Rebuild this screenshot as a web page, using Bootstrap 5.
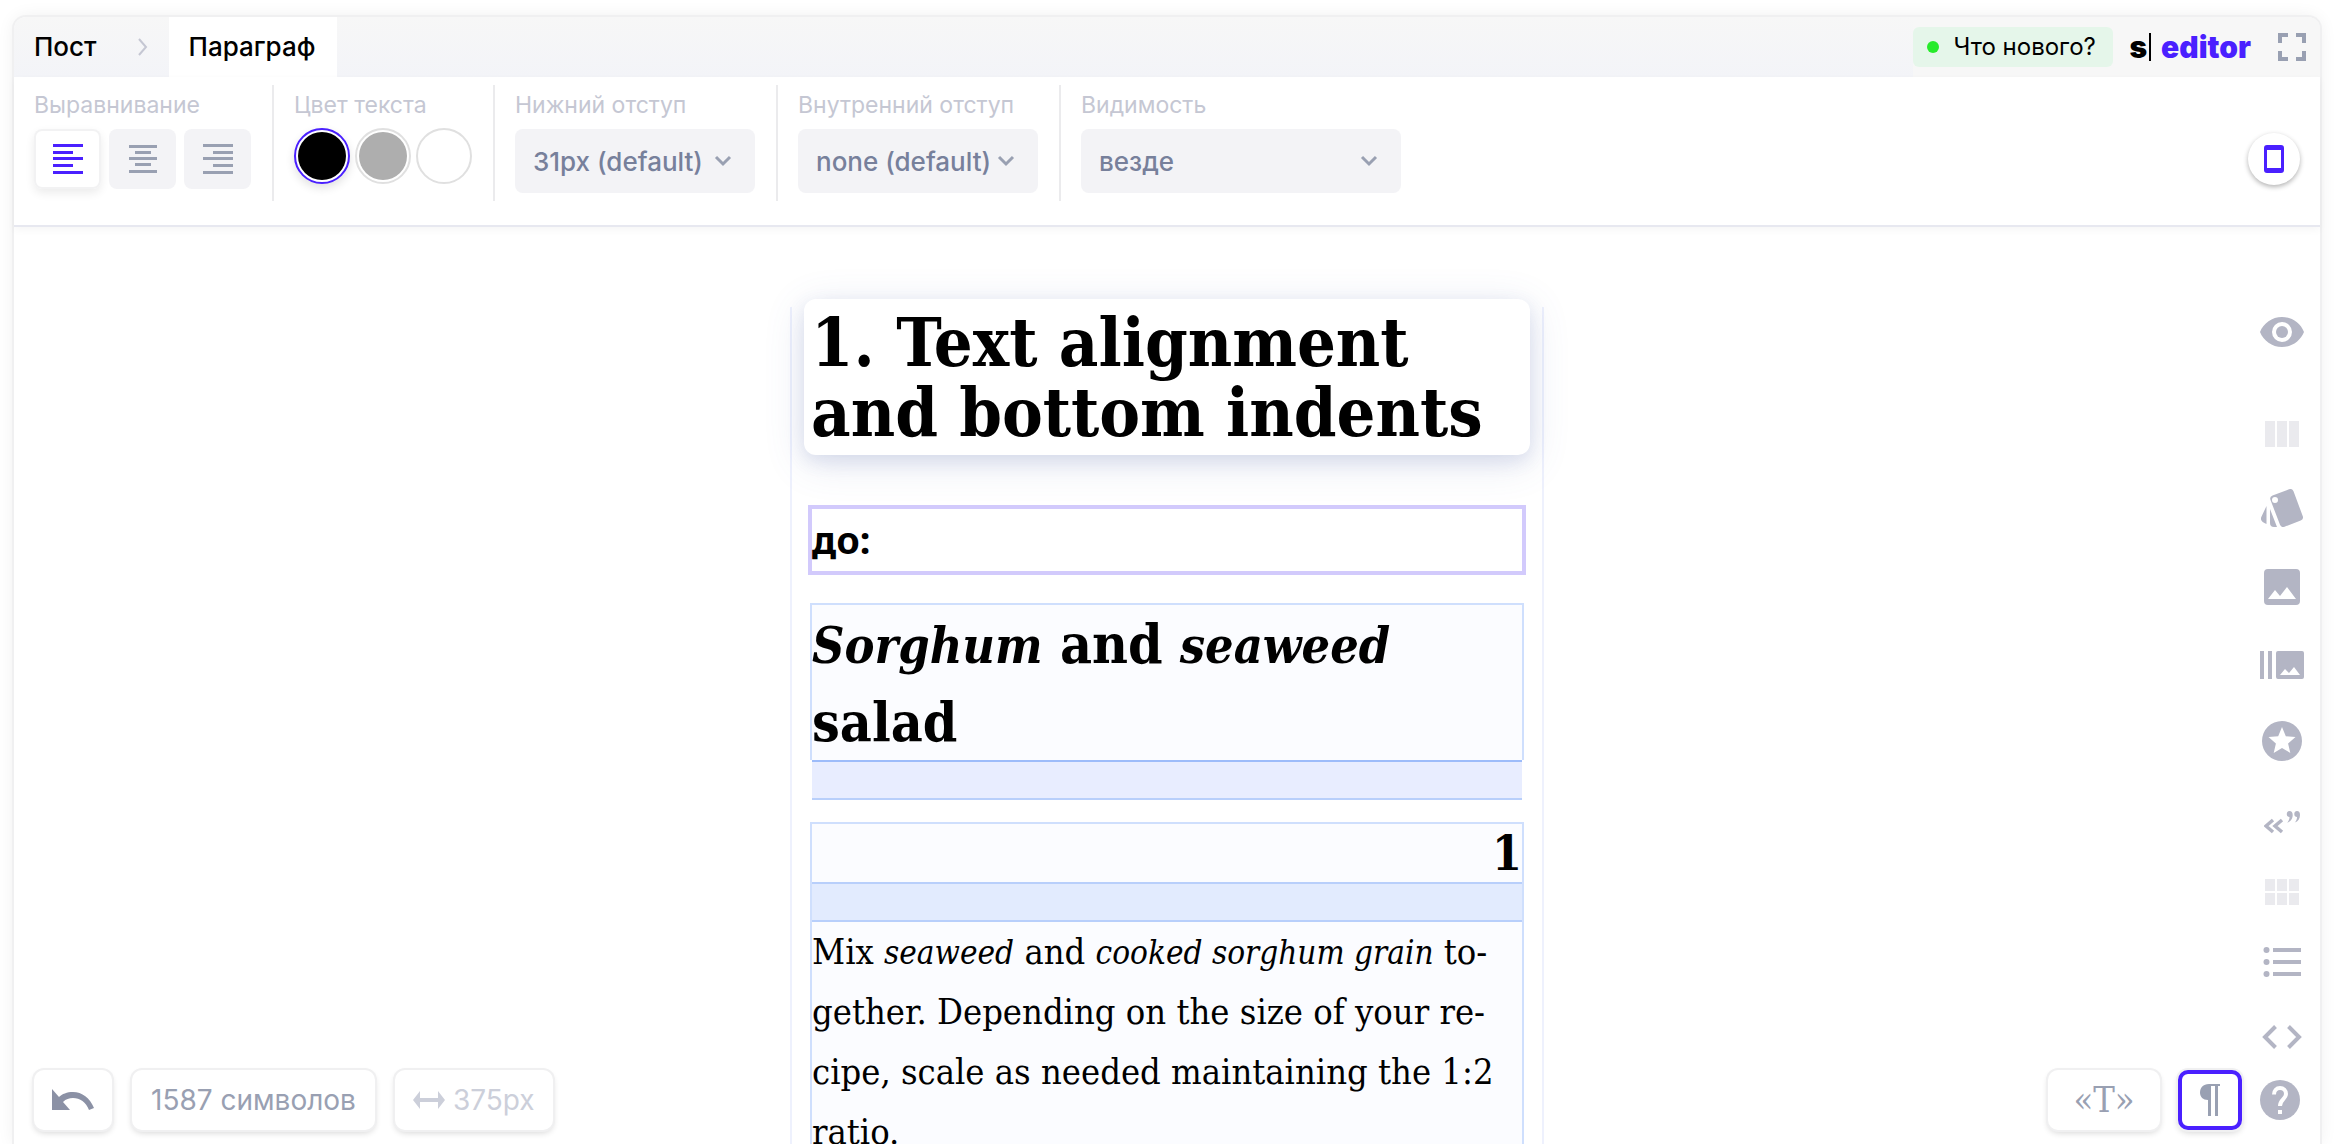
<!DOCTYPE html>
<html lang="ru">
<head>
<meta charset="utf-8">
<meta name="viewport" content="width=device-width, initial-scale=1">
<title>s| editor</title>
<link href="https://cdn.jsdelivr.net/npm/bootstrap@5.3.0/dist/css/bootstrap.min.css" rel="stylesheet">
<style>
:root{--accent:#4a20ff;--icon:#b3b5c4;--slate:#99a0b2;--serif:"DejaVu Serif Condensed","DejaVu Serif",serif}
body{font-family:Inter,sans-serif;font-size:26px;line-height:32px;color:#000;background:#fff;height:100vh;overflow:hidden}
svg{display:block;fill:currentColor}
.shell{margin:17px 14px 0;height:calc(100vh - 17px);border-radius:12px 12px 0 0;box-shadow:0 0 0 2px #f0f0f1,0 0 18px rgba(0,0,0,.07)}
.topbar{height:60px;background:linear-gradient(#f7f7f7,#f3f4f8);border-radius:12px 12px 0 0}
.topbar-end{height:60px;padding-right:14px;background:#f7f7f7;border-radius:0 12px 0 0}
.crumb{color:#000;text-decoration:none;font-weight:500;font-size:26px;padding:0 20px;height:60px}
.crumb.current{background:#fff;padding:0 22px 0 20px}
.crumb-sep{width:12px;margin:0 20px;color:#c5c7d3}
.news{background:#e5f6ea;color:#000;border:0;border-radius:6px;height:40px;width:200px;padding:0 14px;gap:14px;font-size:24px;white-space:nowrap}
.news-dot{width:12px;height:12px;border-radius:50%;background:#26eb2b;flex:none}
.brand{font-weight:900;font-size:30px;color:var(--accent);text-decoration:none;gap:2px;margin:0 27px 0 16px}
.brand-s{color:#000}
.brand-caret{width:2px;height:28px;background:#000;margin-right:8px}
.plain{background:none;border:0;padding:0;color:var(--slate)}
.tools{height:150px;padding:8px 20px 0;border-bottom:2px solid #e7e8f0;box-shadow:0 3px 8px rgba(0,0,0,.04)}
.tool{height:116px;padding:5px 21px 0 20px;border-right:2px solid #ebebed}
.tool:first-child{padding-left:0}
.tool-last{border-right:0}
.tool-name{display:block;font-size:23px;line-height:30px;color:#c5c7d3;margin:0 0 9px;white-space:nowrap}
.align-btn{width:67px;height:60px;border:0;border-radius:8px;background:#f3f3f6;color:var(--slate)}
.align-btn.on{background:#fff;color:var(--accent);box-shadow:inset 0 0 0 2px #f2f2f3,0 4px 10px rgba(0,0,0,.08)}
.swatches{gap:5px}
.swatch{width:56px;height:56px;border-radius:50%;border:2px solid #e0e0e0;padding:2px;background:#fff}
.swatch i{display:block;width:48px;height:48px;border-radius:50%}
.swatch.on{border-color:var(--accent);box-shadow:0 4px 10px rgba(0,0,0,.12)}
.pick{width:240px;height:64px;border:0;border-radius:8px;font-size:26px;font-weight:500;color:#77809b;padding:0 44px 0 18px;background-color:#f3f3f6;background-size:18px 12px;background-position:right 23px center;
background-image:url("data:image/svg+xml,%3Csvg xmlns='http://www.w3.org/2000/svg' viewBox='0 0 18 12'%3E%3Cpath d='M2 2l7 7 7-7' fill='none' stroke='%2399a0b2' stroke-width='3'/%3E%3C/svg%3E")}
.pick-wide{width:320px}
.round{width:52px;height:52px;border-radius:50%;border:0;background:#fff;color:var(--accent);box-shadow:0 2px 5px rgba(0,0,0,.3)}
.stage{display:grid;grid-template-columns:1fr 754px 1fr;overflow:hidden;min-height:0}
.sheet{padding:72px 11px 0;font-family:var(--serif);
background:linear-gradient(#eef1fd,#eef1fd) left 80px/2px 100% no-repeat,linear-gradient(#eef1fd,#eef1fd) right 80px/2px 100% no-repeat}
.title-box{height:156px;border-radius:12px;background:#fff;padding:8px 0 0 7px;margin:0 3px;box-shadow:0 8px 40px rgba(80,100,170,.16),0 6px 18px rgba(80,100,170,.14)}
.title-box h1{font-size:68px;line-height:70px;font-weight:700;margin:0;white-space:nowrap}
.before{height:70px;border:4px solid #d2cafc;margin:50px 7px 28px;font:700 38px/60px "Noto Sans",sans-serif}
.block{border:2px solid #cfdffd;border-bottom:0;background:#fbfcff;margin:0 9px}
.block h2{font-size:55px;line-height:78px;font-weight:700;margin:0;height:155px;white-space:nowrap}
.block h2 em{font-size:50px}
.block h3{font-size:48px;line-height:58px;height:58px;font-weight:700;margin:0;text-align:right}
.block p{font-size:36px;line-height:60px;margin:0;white-space:nowrap}
.block p em{font-size:33px}
.block em{line-height:1}
.spacer{height:40px;border:solid #b8cffb;border-width:2px 0;background:#e8edff}
.spacer-out{margin:0 11px 22px;border-top-color:#9dbcfa}
.spacer-in{background:#e2ebfe}
.rail{padding:90px 16px 0 0;gap:42px;color:var(--icon)}
.rail .plain{color:inherit;width:44px;display:flex;justify-content:center}
.rail .apart{margin-bottom:32px}
.rail .faint{opacity:.27}
.dock{position:absolute;bottom:14px;height:60px}
.dock-left{left:34px;gap:20px}.dock-right{right:34px;gap:18px}
.chip{height:60px;border:0;border-radius:10px;background:#fff;color:var(--slate);font-size:28px;padding:0 19px;box-shadow:0 0 0 2px #f0f0f1,0 3px 6px rgba(0,0,0,.16);white-space:nowrap}
.chip-undo{width:78px;padding:0 18px;color:#8b91a5}
.chip-size{color:#cccfda;gap:8px;padding:0 18px}
.chip-t{width:112px;padding:0;font:36px/40px var(--serif)}
.chip-p{width:64px;padding:0;border:4px solid var(--accent)}
</style>
<script src="https://cdn.jsdelivr.net/npm/bootstrap@5.3.0/dist/js/bootstrap.bundle.min.js"></script>
</head>
<body>
<div class="shell d-flex flex-column">
  <header class="topbar d-flex align-items-center flex-shrink-0">
    <nav class="d-flex align-items-center" aria-label="Путь">
      <a class="crumb d-flex align-items-center" href="#">Пост</a>
      <span class="crumb-sep"><svg width="12" height="18" viewBox="0 0 12 18"><path d="M2 1l7 8-7 8" fill="none" stroke="currentColor" stroke-width="2"/></svg></span>
      <a class="crumb current d-flex align-items-center" href="#">Параграф</a>
    </nav>
    <div class="topbar-end d-flex align-items-center ms-auto">
      <button class="news d-flex align-items-center" type="button"><span class="news-dot"></span>Что нового?</button>
      <a class="brand d-flex align-items-center" href="#"><span class="brand-s">s</span><span class="brand-caret"></span>editor</a>
      <button class="plain" type="button" aria-label="Во весь экран"><svg width="28" height="28" viewBox="0 0 28 28"><path d="M0 0h10v4H4v6H0zM18 0h10v10h-4V4h-6zM0 18h4v6h6v4H0zM24 18h4v10H18v-4h6z"/></svg></button>
    </div>
  </header>

  <section class="tools d-flex flex-shrink-0">
    <div class="tool">
      <span class="tool-name">Выравнивание</span>
      <div class="d-flex gap-2">
        <button class="align-btn on d-flex align-items-center justify-content-center" type="button" aria-label="По левому краю"><svg width="30" height="30" viewBox="0 0 30 30"><path d="M0 0h30v3H0zM0 7h20v3H0zM0 13h30v3H0zM0 20h20v3H0zM0 27h30v3H0z"/></svg></button>
        <button class="align-btn d-flex align-items-center justify-content-center" type="button" aria-label="По центру"><svg width="28" height="30" viewBox="0 0 28 30"><path d="M0 1h28v3H0zM6 7h16v3H6zM0 13h28v3H0zM6 19h16v3H6zM0 26h28v3H0z"/></svg></button>
        <button class="align-btn d-flex align-items-center justify-content-center" type="button" aria-label="По правому краю"><svg width="30" height="30" viewBox="0 0 30 30"><path d="M0 0h30v3H0zM10 7h20v3H10zM0 13h30v3H0zM10 20h20v3H10zM0 27h30v3H0z"/></svg></button>
      </div>
    </div>
    <div class="tool">
      <span class="tool-name mb-2">Цвет текста</span>
      <div class="swatches d-flex">
        <button class="swatch on" type="button" aria-label="Чёрный"><i style="background:#000"></i></button>
        <button class="swatch" type="button" aria-label="Серый"><i style="background:#aeaeae"></i></button>
        <button class="swatch" type="button" aria-label="Белый"><i style="background:#fff"></i></button>
      </div>
    </div>
    <div class="tool">
      <label class="tool-name" for="bottomGap">Нижний отступ</label>
      <select class="form-select pick" id="bottomGap"><option>31px (default)</option></select>
    </div>
    <div class="tool">
      <label class="tool-name" for="innerGap">Внутренний отступ</label>
      <select class="form-select pick" id="innerGap"><option>none (default)</option></select>
    </div>
    <div class="tool tool-last">
      <label class="tool-name" for="visibility">Видимость</label>
      <select class="form-select pick pick-wide" id="visibility"><option>везде</option></select>
    </div>
    <div class="ms-auto d-flex align-items-center pt-2">
      <button class="round d-flex align-items-center justify-content-center" type="button" aria-label="Мобильный вид"><svg width="20" height="28" viewBox="0 0 20 28"><path fill-rule="evenodd" d="M3 0h14a3 3 0 0 1 3 3v22a3 3 0 0 1-3 3H3a3 3 0 0 1-3-3V3a3 3 0 0 1 3-3zM3 5v18h14V5z"/></svg></button>
    </div>
  </section>

  <main class="stage flex-grow-1">
    <div></div>
    <article class="sheet" lang="en">
      <div class="title-box"><h1>1. Text alignment<br>and bottom indents</h1></div>
      <div class="before" lang="ru">до:</div>
      <div class="block"><h2><em>Sorghum</em> and <em>seaweed</em><br>salad</h2></div>
      <div class="spacer spacer-out"></div>
      <div class="block">
        <h3>1</h3>
        <div class="spacer spacer-in"></div>
        <p>Mix <em>seaweed</em> and <em>cooked sorghum grain</em> to-<br>gether. Depending on the size of your re-<br>cipe, scale as needed maintaining the 1:2<br>ratio.</p>
      </div>
    </article>
    <aside class="rail d-flex flex-column align-items-end">
      <button class="plain apart" type="button" aria-label="Просмотр"><svg width="44" height="30" viewBox="0 0 44 30"><path fill-rule="evenodd" d="M22 0C12 0 3.500 6.200 0 15c3.500 8.800 12 15 22 15s18.500-6.200 22-15C40.500 6.200 32 0 22 0zm0 25a10 10 0 1 1 0-20 10 10 0 0 1 0 20z"/><circle cx="22" cy="15" r="6"/></svg></button>
      <button class="plain faint" type="button" aria-label="Колонки"><svg width="34" height="26" viewBox="0 0 34 26"><path d="M0 0h10v26H0zM12 0h10v26H12zM24 0h10v26H24z"/></svg></button>
      <button class="plain" type="button" aria-label="Карточки"><svg width="42" height="38" viewBox="0 0 42 38"><path fill-rule="evenodd" d="M11.500 6.500 28 .3a3.500 3.500 0 0 1 4.500 2L41.700 27a3.500 3.500 0 0 1-2 4.500L23.500 37.700a3.500 3.500 0 0 1-4.500-2L9.500 11a3.500 3.500 0 0 1 2-4.500zM14 8a3 3 0 1 0 0 6 3 3 0 0 0 0-6z"/><path d="M9 20l7 18h-3a4 4 0 0 1-4-4zM5.500 17v18C1 33.500-1 31 .3 28z"/></svg></button>
      <button class="plain pb-1" type="button" aria-label="Изображение"><svg width="36" height="36" viewBox="0 0 36 36"><path fill-rule="evenodd" d="M4 0h28a4 4 0 0 1 4 4v28a4 4 0 0 1-4 4H4a4 4 0 0 1-4-4V4a4 4 0 0 1 4-4zm0 30h28L23 18l-7 9-5-6z"/></svg></button>
      <button class="plain" type="button" aria-label="Галерея"><svg width="44" height="28" viewBox="0 0 44 28"><path fill-rule="evenodd" d="M0 0h4v28H0zM8 0h4v28H8zM18 0h24a2 2 0 0 1 2 2v24a2 2 0 0 1-2 2H18a2 2 0 0 1-2-2V2a2 2 0 0 1 2-2zm2 24h20l-6-8-5 6-4-4z"/></svg></button>
      <button class="plain" type="button" aria-label="Иконка"><svg width="40" height="40" viewBox="0 0 40 40"><path fill-rule="evenodd" d="M20 0a20 20 0 1 1 0 40 20 20 0 0 1 0-40zm0 6-3.800 9.200-9.700.8 7.400 6.400L11.700 32l8.300-5.100 8.300 5.100-2.200-9.600 7.400-6.400-9.700-.8z"/></svg></button>
      <button class="plain" type="button" aria-label="Цитата"><svg width="36" height="34" viewBox="0 0 36 34"><path d="M9 17 2 23l7 6M18 17l-7 6 7 6" fill="none" stroke="currentColor" stroke-width="3.500"/><path d="M25.500 8a3 3 0 0 0-2.700 3.200c0 1.800 1.200 2.800 2.700 2.800 0 2.400-.8 4-2.300 5.600 3.500-1 5.500-4 5.500-7.600 0-2.600-1.200-4-3.200-4zM33 8a3 3 0 0 0-2.700 3.200c0 1.800 1.200 2.800 2.700 2.800 0 2.400-.8 4-2.300 5.600 3.500-1 5.300-4 5.300-7.600 0-2.600-1-4-3-4z"/></svg></button>
      <button class="plain faint" type="button" aria-label="Сетка"><svg width="34" height="26" viewBox="0 0 34 26"><path d="M0 0h10v12H0zM12 0h10v12H12zM24 0h10v12H24zM0 14h10v12H0zM12 14h10v12H12zM24 14h10v12H24z"/></svg></button>
      <button class="plain" type="button" aria-label="Список"><svg width="38" height="36" viewBox="0 0 38 36"><circle cx="3.500" cy="3" r="3"/><circle cx="3.500" cy="15" r="3"/><circle cx="3.500" cy="27" r="3"/><path d="M10 1h28v4H10zM10 13h28v4H10zM10 25h28v4H10z"/></svg></button>
      <button class="plain" type="button" aria-label="Код"><svg width="40" height="24" viewBox="0 0 40 24"><path d="M13.500 1.500 3 12l10.500 10.500M26.500 1.500 37 12 26.500 22.500" fill="none" stroke="currentColor" stroke-width="4"/></svg></button>
    </aside>
  </main>
</div>

<div class="dock dock-left d-flex">
  <button class="chip chip-undo d-flex align-items-center justify-content-center" type="button" aria-label="Отменить"><svg width="42" height="22" viewBox="0 0 42 22"><path d="M0 0v21h18l-7-8c3-3 6-4 10-4 7 0 13 4 16 12l5-2C38 9 30 3 21 3 15 3 10 5 7 8z"/></svg></button>
  <button class="chip" type="button">1587 символов</button>
  <button class="chip chip-size d-flex align-items-center" type="button"><svg width="32" height="18" viewBox="0 0 32 18"><path d="M0 9l7-9v7h18V0l7 9-7 9v-7H7v7z"/></svg>375px</button>
</div>
<div class="dock dock-right d-flex align-items-center">
  <button class="chip chip-t" type="button">«T»</button>
  <button class="chip chip-p d-flex align-items-center justify-content-center" type="button" aria-label="Непечатаемые знаки"><svg width="20" height="32" viewBox="0 0 20 32"><path d="M9 0h11v2h-2v30h-3V2h-4v30H8V16C3 16 0 13 0 8.500S3 0 9 0z"/></svg></button>
  <button class="plain" type="button" aria-label="Помощь"><svg width="40" height="40" viewBox="0 0 40 40"><circle cx="20" cy="20" r="20" fill="#b3b5c4"/><path d="M14 14.500c0-4 2.500-6.500 6-6.500s6 2.500 6 6c0 5-6 5.500-6 12" fill="none" stroke="#fff" stroke-width="4"/><path d="M18 30h4v4h-4z" fill="#fff"/></svg></button>
</div>
</body>
</html>
